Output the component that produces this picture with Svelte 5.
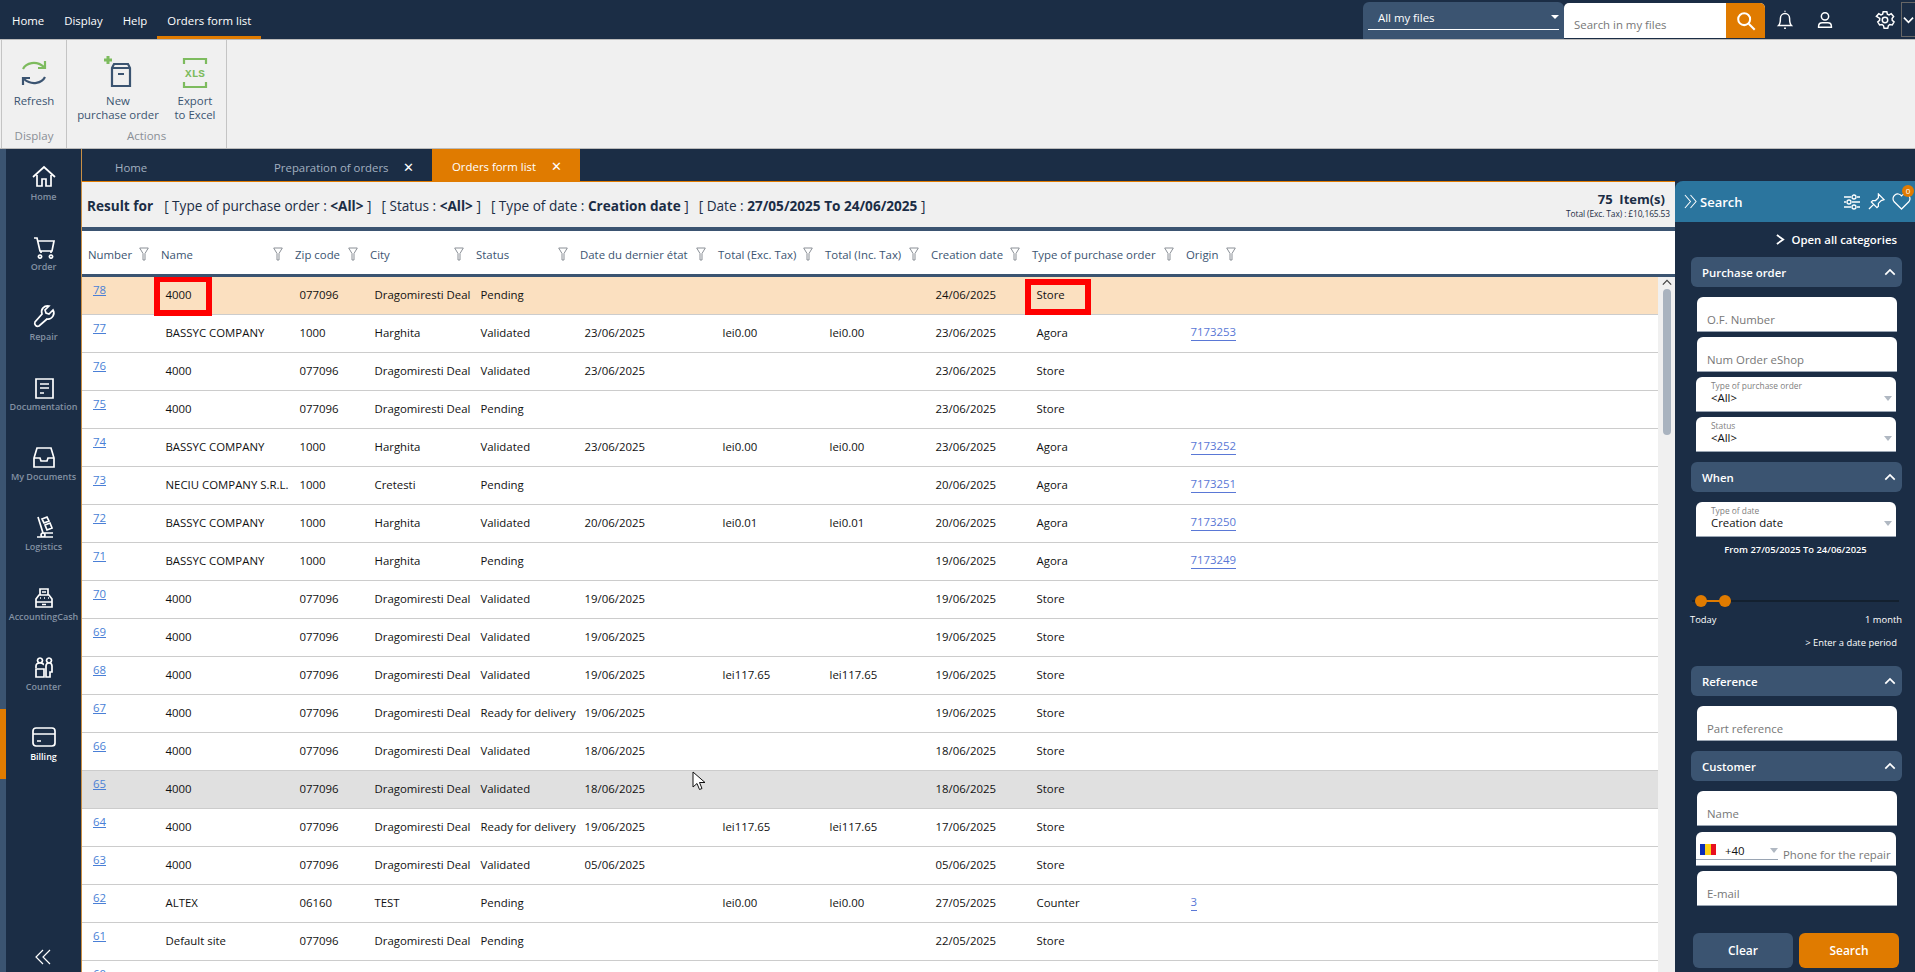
<script>
  const menu = ['Home', 'Display', 'Help'];
  const S = 'Store', D = 'Dragomiresti Deal', Z = '077096', B = 'BASSYC COMPANY';
  const rows = [
    ['78','4000',Z,D,'Pending','','','','24/06/2025',S,''],
    ['77',B,'1000','Harghita','Validated','23/06/2025','lei0.00','lei0.00','23/06/2025','Agora','7173253'],
    ['76','4000',Z,D,'Validated','23/06/2025','','','23/06/2025',S,''],
    ['75','4000',Z,D,'Pending','','','','23/06/2025',S,''],
    ['74',B,'1000','Harghita','Validated','23/06/2025','lei0.00','lei0.00','23/06/2025','Agora','7173252'],
    ['73','NECIU COMPANY S.R.L.','1000','Cretesti','Pending','','','','20/06/2025','Agora','7173251'],
    ['72',B,'1000','Harghita','Validated','20/06/2025','lei0.01','lei0.01','20/06/2025','Agora','7173250'],
    ['71',B,'1000','Harghita','Pending','','','','19/06/2025','Agora','7173249'],
    ['70','4000',Z,D,'Validated','19/06/2025','','','19/06/2025',S,''],
    ['69','4000',Z,D,'Validated','19/06/2025','','','19/06/2025',S,''],
    ['68','4000',Z,D,'Validated','19/06/2025','lei117.65','lei117.65','19/06/2025',S,''],
    ['67','4000',Z,D,'Ready for delivery','19/06/2025','','','19/06/2025',S,''],
    ['66','4000',Z,D,'Validated','18/06/2025','','','18/06/2025',S,''],
    ['65','4000',Z,D,'Validated','18/06/2025','','','18/06/2025',S,''],
    ['64','4000',Z,D,'Ready for delivery','19/06/2025','lei117.65','lei117.65','17/06/2025',S,''],
    ['63','4000',Z,D,'Validated','05/06/2025','','','05/06/2025',S,''],
    ['62','ALTEX','06160','TEST','Pending','','lei0.00','lei0.00','27/05/2025','Counter','3'],
    ['61','Default site',Z,D,'Pending','','','','22/05/2025',S,''],
    ['60','','','','','','','','','','']
  ];
  const cols = ['Number','Name','Zip code','City','Status','Date du dernier état','Total (Exc. Tax)','Total (Inc. Tax)','Creation date','Type of purchase order','Origin'];
  const nav = [
    { label: 'Home', d: 'M2 13 13 3l11 10M6 11v11h5v-7h4v7h5V11' },
    { label: 'Order', d: 'M3 4h3l3 13h12l2-10H7M10 17v2M20 17v2M9 21a1.600 1.600 0 1 0 .01 0M20 21a1.600 1.600 0 1 0 .01 0' },
    { label: 'Repair', d: 'M22 6l-4 4-3-1-1-3 4-4a6 6 0 0 0-7 8L4 18a3 3 0 0 0 4 4l8-7a6 6 0 0 0 6-9z' },
    { label: 'Documentation', d: 'M5 5h17v19H5zM9 10h9M9 14h9M9 19h4' },
    { label: 'My Documents', d: 'M6 4h14l3 10v9H3v-9zM3 14h6l1 3h6l1-3h6' },
    { label: 'Logistics', d: 'M7 3l5 16h10M6 23h16M12 19a2 2 0 1 0 .01 0M11 5l5-2 2 4-5 2zM14 11l5-2 2 5-5 2z' },
    { label: 'AccountingCash', d: 'M9 11V5h8v6M5 23v-8l3-4h10l3 4v8zM5 18h16M11 8h4M9 14h1M13 14h1M17 14h1M11 20.500h4' },
    { label: 'Counter', d: 'M9 4a2.500 2.500 0 1 0 .01 0M18 4a2.500 2.500 0 1 0 .01 0M5 14v-2q0-3 4-3t3 2M15 23V12q0-3 3-3t3 3v6h-2v5zM5 15h8v8H5z' },
    { label: 'Billing', d: 'M5 4h16a3 3 0 0 1 3 3v12a3 3 0 0 1-3 3H5a3 3 0 0 1-3-3V7a3 3 0 0 1 3-3zM2 10h22M6 17h4', active: true }
  ];
</script>

{#snippet funnel()}
  <svg class="funnel" viewBox="0 0 10 14" width="10" height="14"><path d="M.7 1h8.600L6 6.500V13H4V6.500z" /></svg>
{/snippet}

{#snippet caret()}
  <span class="caret"></span>
{/snippet}

{#snippet field(text)}
  <div class="field">{text}</div>
{/snippet}

{#snippet choice(label, value)}
  <div class="choice"><small>{label}</small><span>{value}</span>{@render caret()}</div>
{/snippet}

{#snippet head(text)}
  <div class="sect"><b>{text}</b><svg viewBox="0 0 14 9" width="12" height="8"><path d="M1.500 7.500 7 2l5.500 5.500" /></svg></div>
{/snippet}

<div class="page">
  <header class="top">
    <nav class="menu">
      {#each menu as m}<span class="mi">{m}</span>{/each}
      <span class="mi on">Orders form list</span>
    </nav>
    <div class="tools">
      <div class="scope"><div class="scope-in">All my files<i class="wcaret"></i></div></div>
      <div class="find">
        <span class="ph">Search in my files</span>
        <span class="go"><svg viewBox="0 0 24 24" width="22" height="22"><circle cx="10" cy="10" r="6.500"/><path d="m15 15 6.500 6.500"/></svg></span>
      </div>
      <svg class="ti bell" viewBox="0 0 24 24" width="22" height="22"><path d="M5 18c2-2 2-4 2-8a5 5 0 0 1 10 0c0 4 0 6 2 8zM12 3V2M11 21h2"/></svg>
      <svg class="ti user" viewBox="0 0 24 24" width="22" height="22"><circle cx="12" cy="8" r="4"/><path d="M5 20v-1q0-4 4-4h6q4 0 4 4v1z"/></svg>
      <svg class="ti gear" viewBox="0 0 24 24" width="22" height="22"><circle cx="12" cy="12" r="3"/><path d="m10 3h4l.6 2.700 1.800.8 2.400-1.400 2.600 3-1.700 2.200.2 2 2 1.800-2 3.400-2.700-.6-1.500 1.200-.7 2.800h-4l-.7-2.800-1.500-1.200-2.700.6-2-3.400 2-1.800.2-2L2.600 8.100l2.600-3 2.400 1.400 1.800-.8z"/></svg>
      <span class="more"><svg viewBox="0 0 12 8" width="11" height="8"><path d="m1 1.500 5 5 5-5"/></svg></span>
    </div>
  </header>

  <section class="ribbon">
    <div class="group g1">
      <div class="btns">
        <div class="rb rb1">
          <svg viewBox="0 0 30 30" width="30" height="30" class="ico"><path class="gr" d="M4 11C7 5 17 2 25 9M26 3v7h-7"/><path class="bl" d="M26 19c-3 6-13 9-21 2M4 27v-7h7"/></svg>
          <span>Refresh</span>
        </div>
      </div>
      <div class="glabel">Display</div>
    </div>
    <div class="group g2">
      <div class="btns">
        <div class="rb rb2">
          <svg viewBox="0 0 30 32" width="30" height="32" class="ico"><path class="gr thick" d="M5 1v8M1 5h8"/><path class="bl" d="M9 13l2-4h14l2 4v18H9zM9 13h18M15 19h6"/></svg>
          <span>New<br />purchase order</span>
        </div>
        <div class="rb rb3">
          <svg viewBox="0 0 26 32" width="26" height="32" class="ico"><path class="gr" d="M2 7V2h22v5M2 25v5h22v-5"/><text x="13" y="20" class="xls">XLS</text></svg>
          <span>Export<br />to Excel</span>
        </div>
      </div>
      <div class="glabel">Actions</div>
    </div>
  </section>

  <div class="work">
    <aside class="rail">
      {#each nav as n}
        <div class="ni" class:active={n.active}>
          <svg viewBox="0 0 26 26" width="26" height="26"><path d={n.d} /></svg>
          <span>{n.label}</span>
        </div>
      {/each}
      <svg class="collapse" viewBox="0 0 16 16" width="16" height="16"><path d="M8 1 1 8l7 7M15 1 8 8l7 7"/></svg>
    </aside>

    <div class="right">
      <div class="tabs">
        <div class="tab t1">Home</div>
        <div class="tab t2">Preparation of orders<span class="x">✕</span></div>
        <div class="tab t3">Orders form list<span class="x">✕</span></div>
      </div>
      <div class="body">
        <main class="content">
          <div class="result">
            <div class="crit">
              <b>Result for</b>
              <span>[ Type of purchase order : <b>&lt;All&gt;</b> ]</span>
              <span>[ Status : <b>&lt;All&gt;</b> ]</span>
              <span>[ Type of date : <b>Creation date</b> ]</span>
              <span>[ Date : <b>27/05/2025 To 24/06/2025</b> ]</span>
            </div>
            <div class="count"><b>75&nbsp; Item(s)</b><small>Total (Exc. Tax) : £10,165.53</small></div>
          </div>
          <div class="thead grid">
            {#each cols as c}
              <div class="th"><span>{c}</span>{@render funnel()}</div>
            {/each}
          </div>
          <div class="tbody">
            <div class="rows">
              {#each rows as r}
                <div class="row grid" class:sel={r[0] === '78'} class:hover={r[0] === '65'}>
                  <div class="td num"><a href="#n">{r[0]}</a></div>
                  <div class="td">{r[1]}{#if r[0] === '78'}<i class="mark m1"></i>{/if}</div>
                  {#each r.slice(2, 9) as v}<div class="td">{v}</div>{/each}
                  <div class="td">{r[9]}{#if r[0] === '78'}<i class="mark m2"></i>{/if}</div>
                  <div class="td">{#if r[10]}<a class="org" href="#o">{r[10]}</a>{/if}</div>
                </div>
              {/each}
            </div>
            <div class="sbar">
              <svg viewBox="0 0 12 8" width="10" height="7"><path d="m1 6.500 5-5 5 5"/></svg>
              <div class="thumb"></div>
            </div>
            <svg class="cursor" viewBox="0 0 14 21" width="14" height="21"><path d="M1 1v15l4-3.500 2.500 6 2.500-1-2.500-6H13z"/></svg>
          </div>
        </main>

        <aside class="panel">
          <div class="phead">
            <svg class="pchev" viewBox="0 0 14 16" width="13" height="15"><path d="M1 1l6 7-6 7M7 1l6 7-6 7"/></svg>
            <span class="ptitle">Search</span>
            <svg class="pi" viewBox="0 0 18 18" width="18" height="18"><path d="M1 4h7M14 4h3M1 9h2M9 9h8M1 14h7M14 14h3"/><circle cx="11" cy="4" r="2"/><circle cx="6" cy="9" r="2"/><circle cx="11" cy="14" r="2"/></svg>
            <svg class="pi pin" viewBox="0 0 18 18" width="17" height="17"><path d="M11 1l6 6-3 1-3 3 0 3-1.500 1.500-6-6L5 8l3 0 3-3zM6 12l-5 5"/></svg>
            <span class="heart">
              <svg class="pi" viewBox="0 0 20 18" width="19" height="17"><path d="M10 17 2 9a4.800 4.800 0 0 1 8-6 4.800 4.800 0 0 1 8 6z"/></svg>
              <em>0</em>
            </span>
          </div>
          <div class="pbody">
            <div class="openall"><svg viewBox="0 0 10 12" width="9" height="11"><path d="m1 1 7 5-7 5"/></svg>Open all categories</div>
            {@render head('Purchase order')}
            <div class="fields">
              {@render field('O.F. Number')}
              {@render field('Num Order eShop')}
              {@render choice('Type of purchase order', '<All>')}
              {@render choice('Status', '<All>')}
            </div>
            {@render head('When')}
            <div class="fields">
              {@render choice('Type of date', 'Creation date')}
            </div>
            <div class="fromto">From 27/05/2025 To 24/06/2025</div>
            <div class="slider">
              <div class="track"><span class="filled"></span><i class="dot d1"></i><i class="dot d2"></i></div>
              <div class="ends"><span>Today</span><span>1 month</span></div>
            </div>
            <div class="period">&gt; Enter a date period</div>
            {@render head('Reference')}
            <div class="fields">{@render field('Part reference')}</div>
            {@render head('Customer')}
            <div class="fields">
              {@render field('Name')}
              <div class="phone">
                <span class="code">
                  <span class="flag"><i></i><i></i><i></i></span>
                  <span class="dial">+40</span>
                  {@render caret()}
                </span>
                <span class="pl">Phone for the repair</span>
              </div>
              {@render field('E-mail')}
            </div>
            <div class="actions">
              <button class="clear">Clear</button>
              <button class="search">Search</button>
            </div>
          </div>
        </aside>
      </div>
    </div>
  </div>
</div>

<style>
  :global(body) { margin: 0; background: #1b2d45; }
  .page {
    --navy: #1b2d45;
    --slate: #3b5471;
    --orange: #e07b00;
    display: grid;
    grid-template-rows: 39px 110px 1fr;
    width: 1915px;
    height: 972px;
    overflow: hidden;
    font-family: "Open Sans", "Noto Sans", sans-serif;
    font-size: 11.4px;
    color: #111;
  }
  .top { background: var(--navy); display: flex; justify-content: space-between; }
  .menu { display: flex; padding-left: 2px; }
  .mi { color: #fff; padding: 0 10px; line-height: 42px; font-size: 11.4px; height: 36px; }
  .mi.on { border-bottom: 3px solid var(--orange); }
  .tools { display: flex; align-items: flex-start; }
  .scope { width: 201px; height: 37px; margin-top: 2px; background: var(--slate); border-radius: 6px 6px 0 0; padding: 0 5px; box-sizing: border-box; }
  .scope-in { position: relative; color: #fff; height: 27px; box-sizing: content-box; border-bottom: 1px solid #fff; line-height: 31px; padding-left: 10px; font-size: 11.4px; }
  .wcaret { position: absolute; right: 0; top: 13px; border: 4px solid transparent; border-top: 4px solid #fff; }
  .find { width: 201px; height: 35px; margin-top: 3px; background: #fff; border-radius: 5px 5px 0 0; display: flex; justify-content: space-between; overflow: hidden; }
  .ph { color: #777; padding: 14px 0 0 10px; font-size: 11.4px; }
  .go { width: 39px; background: var(--orange); display: flex; align-items: center; justify-content: center; }
  .go svg { fill: none; stroke: #fff; stroke-width: 2.200; }
  .ti { fill: none; stroke: #fff; stroke-width: 1.600; margin-top: 9px; }
  .bell { margin-left: 9px; }
  .user { margin-left: 18px; }
  .gear { margin-left: 38px; }
  .more { margin: 2px 0 0 5px; width: 14px; height: 35px; box-sizing: border-box; border: 1px solid #666; border-right: 0; display: flex; align-items: center; justify-content: center; }
  .more svg { fill: none; stroke: #fff; stroke-width: 1.800; }

  .ribbon { background: #f0f0f0; display: flex; border-top: 1px solid #bbb; border-bottom: 1px solid #bbb; padding-left: 1px; box-sizing: border-box; }
  .group { border-left: 1px solid #c4c4c4; display: flex; flex-direction: column; }
  .g1 { width: 64px; }
  .g2 { width: 159px; border-right: 1px solid #c4c4c4; }
  .btns { display: flex; flex: 1; }
  .rb { display: flex; flex-direction: column; align-items: center; text-align: center; color: #3b5471; font-size: 11.4px; line-height: 14px; }
  .rb1 { width: 64px; padding-top: 18px; }
  .rb2 { width: 102px; padding-top: 15px; }
  .rb3 { width: 52px; padding-top: 17px; }
  .ico { fill: none; stroke-width: 2.200; }
  .rb1 span { margin-top: 6px; }
  .rb2 span { margin-top: 7px; }
  .rb3 span { margin-top: 5px; }
  .gr { stroke: #7dbb5e; }
  .bl { stroke: #3b5471; }
  .thick { stroke-width: 3; }
  .xls { font: 700 11px "Liberation Mono", monospace; fill: #7dbb5e; stroke: none; text-anchor: middle; }
  .glabel { text-align: center; color: #8a8f96; font-size: 11.5px; line-height: 14px; padding-bottom: 5px; }

  .work { display: grid; grid-template-columns: 82px 1fr; min-height: 0; }
  .rail { background: var(--navy); border-left: 6px solid var(--slate); border-right: 1px solid #c98f45; display: flex; flex-direction: column; align-items: stretch; box-sizing: border-box; }
  .ni { height: 70px; box-sizing: border-box; padding: 15px 0 0 0; display: flex; flex-direction: column; align-items: center; color: #8391a3; font-size: 9px; font-weight: 600; white-space: nowrap; }
  .ni svg { fill: none; stroke: #fff; stroke-width: 1.700; display: block; }
  .ni span { line-height: 13px; }
  .ni.active { color: #fff; margin-left: -6px; border-left: 6px solid var(--orange); }
  .collapse { margin: auto 0 7px 29px; fill: none; stroke: #fff; stroke-width: 1.200; }

  .right { display: flex; flex-direction: column; min-width: 0; min-height: 0; }
  .tabs { height: 32px; display: flex; background: var(--navy); flex: none; }
  .tab { position: relative; height: 32px; line-height: 37px; box-sizing: border-box; padding-left: 20px; color: #a2b0c0; font-size: 11.4px; }
  .t1 { margin-left: 13px; width: 159px; }
  .t2 { width: 178px; }
  .t3 { width: 148px; background: var(--orange); color: #fff; line-height: 35px; }
  .x { position: absolute; font-size: 13px; color: #fff; }
  .t2 .x { left: 149px; }
  .t3 .x { left: 119px; }

  .body { flex: 1; display: flex; min-height: 0; }
  .content { width: 1593px; flex: none; display: flex; flex-direction: column; border-top: 1px solid var(--orange); background: #fff; overflow: hidden; box-sizing: border-box; }
  .result { height: 49px; flex: none; box-sizing: border-box; background: #f0f0f0; border-bottom: 4px solid var(--slate); display: flex; justify-content: space-between; align-items: center; padding: 0 5px; color: #1b2d45; font-size: 13.6px; }
  .crit { display: flex; gap: 10px; margin-top: 1px; }
  .crit > b { margin-right: 1px; }
  .count { display: flex; flex-direction: column; align-items: flex-end; line-height: 13px; margin-top: 1px; }
  .count b { font-size: 13px; line-height: 16px; margin-right: 5px; }
  .count small { font-size: 8.4px; letter-spacing: -.1px; }
  .grid { display: grid; grid-template-columns: 74px 134px 75px 106px 104px 138px 107px 106px 101px 154px 62px; }
  .thead { height: 46px; flex: none; box-sizing: border-box; border-bottom: 3px solid var(--slate); padding-top: 3px; }
  .th { display: flex; justify-content: space-between; align-items: center; padding: 0 7px 0 5px; color: #3b5471; font-size: 11.4px; white-space: nowrap; }
  .th:first-child { padding-left: 6px; }
  .funnel { fill: none; stroke: #8a8f96; stroke-width: 1; flex: none; }
  .tbody { position: relative; flex: 1; display: flex; min-height: 0; overflow: hidden; }
  .rows { width: 1576px; flex: none; }
  .row { height: 38px; box-sizing: border-box; border-bottom: 1px solid #ccc; background: #fff; }
  .row.sel { background: #fbe0c0; }
  .row.hover { background: #e0e0e0; }
  .td { position: relative; display: flex; align-items: center; padding: 0 0 2px 9.5px; white-space: nowrap; font-size: 11.4px; color: #111; }
  .num { padding: 5px 0 0 11px; align-items: flex-start; }
  .num a { color: #4a7fd6; line-height: 15px; }
  .org { color: #5a78d6; text-decoration: none; border-bottom: 1px solid #5a78d6; padding-bottom: 1px; }
  .mark { position: absolute; box-sizing: border-box; border: 6px solid #f00; pointer-events: none; }
  .m1 { left: -2px; top: -1px; width: 58px; height: 40px; }
  .m2 { left: -2px; top: 2px; width: 66px; height: 36px; }
  .sbar { width: 17px; background: #f0f0f0; display: flex; flex-direction: column; align-items: center; padding-top: 2px; }
  .sbar svg { fill: none; stroke: #444; stroke-width: 1.500; }
  .thumb { width: 8px; height: 146px; margin-top: 3px; background: #a9b3bf; border-radius: 4px; }
  .cursor { position: absolute; left: 610px; top: 494px; fill: #fff; stroke: #111; stroke-width: 1; }

  .panel { width: 240px; flex: none; background: var(--navy); display: flex; flex-direction: column; }
  .phead { height: 41px; flex: none; background: #2b759e; border-radius: 8px 0 0 0; display: flex; align-items: center; color: #fff; padding-left: 9px; }
  .pchev { fill: none; stroke: #fff; stroke-width: 1.100; }
  .ptitle { font-size: 13px; font-weight: 600; margin-left: 3px; flex: 1; }
  .pi { fill: none; stroke: #fff; stroke-width: 1.300; }
  .pin { margin: 0 7px; }
  .heart { position: relative; margin-right: 4px; display: flex; }
  .heart em { position: absolute; right: -3px; top: -8px; width: 12px; height: 12px; border-radius: 6px; background: var(--orange); color: #fff; font: normal 8px/12px "Open Sans", sans-serif; text-align: center; }
  .pbody { padding: 0 13px 0 16px; flex: 1; }
  .openall { height: 35px; color: #fff; font-size: 11.4px; font-weight: 600; display: flex; align-items: center; justify-content: flex-end; gap: 6px; padding: 0 5px 1px 0; box-sizing: border-box; }
  .openall svg { fill: none; stroke: #fff; stroke-width: 2; }
  .sect { height: 30px; background: var(--slate); border-radius: 6px; display: flex; align-items: center; justify-content: space-between; padding: 0 6px 0 11px; color: #fff; font-size: 11.4px; }
  .sect b { font-weight: 600; }
  .sect svg { fill: none; stroke: #fff; stroke-width: 2; }
  .fields { display: flex; flex-direction: column; gap: 5px; padding: 10px 5px 10px 6px; }
  .field { height: 35px; box-sizing: border-box; background: #fff; border-radius: 6px 6px 0 0; border-bottom: 1px solid #9aa5b3; color: #777; padding: 16px 0 0 10px; line-height: 14px; font-size: 11.4px; }
  .choice { position: relative; height: 35px; margin: 0 1px 0 -1px; box-sizing: border-box; background: #fff; border-radius: 6px 6px 0 0; border-bottom: 1px solid #9aa5b3; padding: 3px 0 0 15px; display: flex; flex-direction: column; }
  .choice small { color: #808080; font-size: 8.4px; line-height: 12px; }
  .choice span:not(.caret) { color: #111; font-size: 11.4px; line-height: 12px; }
  .caret { position: absolute; right: 4px; top: 19px; border: 4px solid transparent; border-top: 5px solid #b0b8c2; }
  .fromto { color: #fff; text-align: center; font-size: 9.4px; font-weight: 600; line-height: 12px; margin-top: -3px; padding-right: 2px; }
  .slider { margin-top: 44px; padding-left: 1px; }
  .track { position: relative; height: 2px; background: #13202f; margin: 0 3px 0 0; }
  .filled { display: block; width: 24px; height: 2px; margin-left: 11px; background: var(--orange); }
  .dot { position: absolute; top: -5px; width: 12px; height: 12px; border-radius: 6px; background: var(--orange); }
  .d1 { left: 3px; }
  .d2 { left: 27px; }
  .ends { display: flex; justify-content: space-between; color: #fff; font-size: 9.4px; font-weight: 500; margin: 12px 0 0 -2px; line-height: 12px; }
  .period { color: #fff; text-align: right; font-size: 9.4px; line-height: 12px; margin-top: 11px; margin-bottom: 17px; padding-right: 5px; font-weight: 500; }
  .phone { height: 34px; margin: 1px 1px 0 -1px; box-sizing: border-box; background: #fff; border-radius: 6px 6px 0 0; border-bottom: 1px solid #9aa5b3; display: flex; color: #777; font-size: 11.4px; white-space: nowrap; }
  .code { position: relative; width: 82px; height: 28px; flex: none; box-sizing: border-box; border-bottom: 1px solid #9aa5b3; display: flex; align-items: flex-end; color: #111; }
  .code .caret { top: 16px; right: 0; }
  .flag { display: flex; width: 16px; height: 11px; margin: 0 9px 4px 4px; }
  .flag i { flex: 1; }
  .flag i:nth-child(1) { background: #0a2db8; }
  .flag i:nth-child(2) { background: #fcd116; }
  .flag i:nth-child(3) { background: #e8101f; }
  .dial { line-height: 16px; }
  .pl { margin: 15px 0 0 5px; line-height: 15px; }
  .actions { display: flex; gap: 6px; padding: 17px 0 0 2px; }
  .actions button { width: 100px; height: 35px; border: 0; border-radius: 6px; color: #fff; font: 600 12px "Open Sans", sans-serif; }
  .clear { background: var(--slate); }
  .search { background: var(--orange); }
</style>
